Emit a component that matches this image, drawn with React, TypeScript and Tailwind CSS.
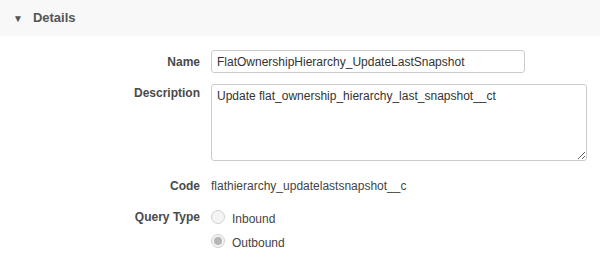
import React from 'react';

const Label = ({ children }: { children: React.ReactNode }) => (
	<div className="w-[211px] shrink-0 pr-[11px] text-right text-[12px] font-bold leading-[14px] text-[#4a4a4a]">
		{children}
	</div>
);

const Radio = ({ checked }: { checked?: boolean }) => (
	<span className="flex h-[14px] w-[14px] shrink-0 items-center justify-center rounded-full border border-[#cfcfcf] bg-[#f4f4f4]">
		{checked && <span className="h-[8px] w-[8px] rounded-full bg-[#b5b5b5]" />}
	</span>
);

export default function App() {
	return (
		<div className="h-[258px] w-[600px] overflow-hidden bg-white font-['Liberation_Sans',Arial,sans-serif]">
			<div className="flex h-[36px] items-center bg-[#f8f8f8] pl-[13px]">
				<span className="text-[10px] text-[#555]">▼</span>
				<span className="ml-[10px] text-[13px] font-bold text-[#555]">Details</span>
			</div>

			<div className="mt-[14px] flex items-center">
				<Label>Name</Label>
				<input
					readOnly
					value="FlatOwnershipHierarchy_UpdateLastSnapshot"
					className="h-[23px] w-[314px] rounded-[3px] border border-[#cccccc] px-[5px] text-[12px] text-[#333] outline-none"
				/>
			</div>

			<div className="mt-[11px] flex items-start">
				<div className="pt-[2px]">
					<Label>Description</Label>
				</div>
				<textarea
					readOnly
					value="Update flat_ownership_hierarchy_last_snapshot__ct"
					className="h-[77px] w-[376px] resize rounded-[3px] border border-[#cccccc] px-[5px] py-[4px] text-[12px] leading-[14px] text-[#333] outline-none"
				/>
			</div>

			<div className="mt-[18px] flex items-center">
				<Label>Code</Label>
				<span className="text-[12px] leading-[14px] text-[#444]">flathierarchy_updatelastsnapshot__c</span>
			</div>

			<div className="mt-[17px] flex items-start">
				<div className="pt-0">
					<Label>Query Type</Label>
				</div>
				<div className="flex flex-col gap-[10px]">
					<div className="flex h-[14px] items-center gap-[7px]">
						<Radio />
						<span className="pt-[3px] text-[12px] leading-[14px] text-[#444]">Inbound</span>
					</div>
					<div className="flex h-[14px] items-center gap-[7px]">
						<Radio checked />
						<span className="pt-[3px] text-[12px] leading-[14px] text-[#444]">Outbound</span>
					</div>
				</div>
			</div>
		</div>
	);
}
